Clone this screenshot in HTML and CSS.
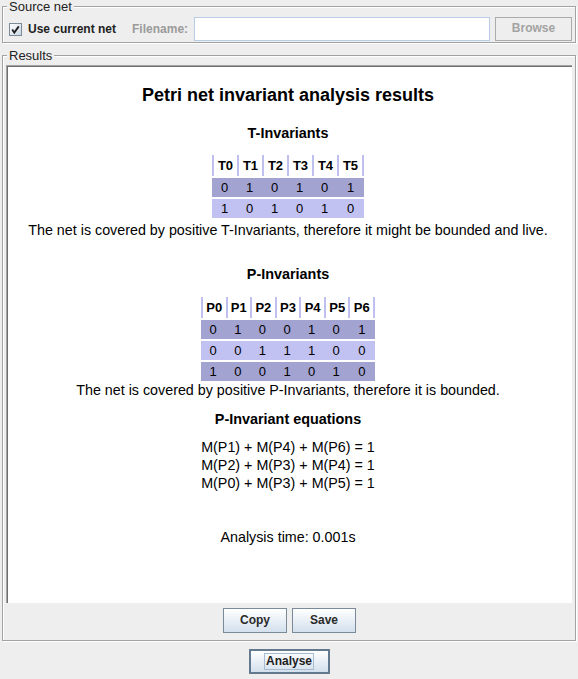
FILE: index.html
```html
<!DOCTYPE html>
<html>
<head>
<meta charset="utf-8">
<link rel="stylesheet" href="styles.css">
</head>
<body>
<div class="window">
  <fieldset class="group source">
    <legend>Source net</legend>
    <div class="source-row">
      <label class="check">
        <svg class="box" width="13" height="13" viewBox="0 0 13 13">
          <defs><linearGradient id="cg" x1="0" y1="0" x2="1" y2="1"><stop offset="0" stop-color="#ffffff"/><stop offset="1" stop-color="#c9d7e5"/></linearGradient></defs>
          <rect x="0.5" y="0.5" width="12" height="12" fill="url(#cg)" stroke="#7b8a98"/>
          <path d="M3.2 6.6 L5.3 9.6 L9.8 3.4" fill="none" stroke="#1e1e1e" stroke-width="1.8"/>
        </svg>
        <span>Use current net</span>
      </label>
      <span class="fname">Filename:</span>
      <div class="field"></div>
      <button class="btn disabled">Browse</button>
    </div>
  </fieldset>

  <fieldset class="group results">
    <legend>Results</legend>
    <div class="panel">
      <div class="doc">
        <h2 class="title">Petri net invariant analysis results</h2>
        <h3 class="head t-head">T-Invariants</h3>
        <table class="inv t-inv">
          <tr><th>T0</th><th>T1</th><th>T2</th><th>T3</th><th>T4</th><th>T5</th></tr>
          <tr class="r1"><td>0</td><td>1</td><td>0</td><td>1</td><td>0</td><td>1</td></tr>
          <tr class="r2"><td>1</td><td>0</td><td>1</td><td>0</td><td>1</td><td>0</td></tr>
        </table>
        <p class="text t-text">The net is covered by positive T-Invariants, therefore it might be bounded and live.</p>
        <h3 class="head p-head">P-Invariants</h3>
        <table class="inv p-inv">
          <tr><th>P0</th><th>P1</th><th>P2</th><th>P3</th><th>P4</th><th>P5</th><th>P6</th></tr>
          <tr class="r1"><td>0</td><td>1</td><td>0</td><td>0</td><td>1</td><td>0</td><td>1</td></tr>
          <tr class="r2"><td>0</td><td>0</td><td>1</td><td>1</td><td>1</td><td>0</td><td>0</td></tr>
          <tr class="r1"><td>1</td><td>0</td><td>0</td><td>1</td><td>0</td><td>1</td><td>0</td></tr>
        </table>
        <p class="text p-text">The net is covered by positive P-Invariants, therefore it is bounded.</p>
        <h3 class="head eq-head">P-Invariant equations</h3>
        <div class="eqs">
          <div>M(P1) + M(P4) + M(P6) = 1</div>
          <div>M(P2) + M(P3) + M(P4) = 1</div>
          <div>M(P0) + M(P3) + M(P5) = 1</div>
        </div>
        <p class="text time">Analysis time: 0.001s</p>
      </div>
    </div>
    <div class="actions">
      <button class="btn">Copy</button>
      <button class="btn">Save</button>
    </div>
  </fieldset>

  <div class="bottom">
    <button class="btn default"><span class="focus">Analyse</span></button>
  </div>
</div>
</body>
</html>
```

FILE: styles.css
```css
html, body {
  margin: 0;
  padding: 0;
  background: #eeeeee;
  overflow: hidden;
}
body {
  font-family: "Liberation Sans", Arial, sans-serif;
  color: #222;
}
.window {
  width: 578px;
  height: 679px;
}
.group {
  margin: 0 2px;
  padding: 4px 3px 1px 3px;
  border: 1px solid #a2a2a2;
  box-shadow: inset 1px 1px 0 #ffffff, 1px 1px 0 #ffffff;
  min-width: 0;
}
.group legend {
  font-size: 13px;
  line-height: 13px;
  height: 13px;
  padding: 0 2px;
  margin-left: 1px;
  background: #eeeeee;
  color: #222;
}
.source-row {
  display: flex;
  align-items: center;
  height: 24px;
}
.check {
  display: flex;
  align-items: center;
  margin-left: 3px;
  font-size: 12px;
  font-weight: bold;
  color: #222;
}
.check .box {
  display: block;
  margin-right: 6px;
}
.fname {
  margin-left: 16px;
  font-size: 12px;
  font-weight: bold;
  color: #9a9a9a;
}
.field {
  flex: 1;
  height: 24px;
  box-sizing: border-box;
  margin-left: 6px;
  background: #ffffff;
  border: 1px solid #b6cde3;
}
.btn {
  font-family: "Liberation Sans", Arial, sans-serif;
  font-size: 12px;
  font-weight: bold;
  color: #2a2a2a;
  height: 25px;
  box-sizing: border-box;
  padding: 0 16px 2px;
  border: 1px solid #7a8a99;
  border-radius: 0;
  background: linear-gradient(#ffffff, #d3e0ed);
  margin: 0;
}
.btn.disabled {
  margin-left: 5px;
  width: 77px;
  height: 24px;
  padding: 0 0 2px;
  color: #a3a3a3;
  background: #eeeeee;
  border: 1px solid #ababab;
}
.results {
  margin-top: 6px;
  padding: 3px 2px 7px 3px;
}
.panel {
  height: 538px;
  box-sizing: border-box;
  background: #ffffff;
  border-top: 1px solid #a4a4a4;
  border-left: 1px solid #a4a4a4;
  box-shadow: inset 1px 1px 0 #6f6f6f;
  margin-right: 1px;
  overflow: hidden;
}
.doc {
  padding-right: 3px;
  display: flex;
  flex-direction: column;
  align-items: center;
  text-align: center;
}
.title {
  margin: 18px 0 0 0;
  font-size: 18px;
  line-height: 22px;
  font-weight: bold;
  color: #000;
}
.head {
  margin: 0;
  font-size: 14.4px;
  line-height: 18px;
  font-weight: bold;
  color: #000;
}
.t-head { margin-top: 18px; }
.p-head { margin-top: 27px; }
.eq-head { margin-top: 12px; }
.inv {
  border-collapse: separate;
  border-spacing: 0 2px;
  font-size: 13px;
  color: #000;
}
.t-inv { margin-top: 11px; }
.p-inv { margin-top: 12px; }
.inv th {
  height: 21px;
  padding: 0;
  font-weight: bold;
  border-left: 2px solid #c0c0f0;
  background: #ffffff;
}
.inv th:last-child {
  border-right: 2px solid #c0c0f0;
}
.t-inv th { width: 23px; }
.p-inv th { width: 22.6px; }
.inv td {
  height: 19px;
  padding: 0;
  text-align: center;
}
.inv tr.r1 td { background: #a3a3d2; }
.inv tr.r2 td { background: #c2c2f2; }
.text {
  margin: 0;
  font-size: 14.3px;
  line-height: 16px;
  color: #000;
}
.t-text { margin-top: 2px; }
.p-text { margin-top: -1px; }
.eqs {
  margin-top: 10px;
  font-size: 14.3px;
  line-height: 18px;
  color: #000;
}
.time {
  margin-top: 37px;
}
.actions {
  display: flex;
  justify-content: center;
  gap: 5px;
  margin-top: 5px;
}
.actions .btn:last-child {
  padding: 0 17px 2px;
}
.bottom {
  display: flex;
  justify-content: center;
  margin-top: 8px;
}
.btn.default {
  width: 81px;
  border: 2px solid #62798e;
  padding: 0;
  display: flex;
  align-items: center;
  justify-content: center;
}
.focus {
  border: 1px solid #a7bcd1;
  padding: 1px 1px;
  line-height: 13px;
  font-weight: bold;
  font-size: 12px;
  color: #1e1e1e;
}
```
